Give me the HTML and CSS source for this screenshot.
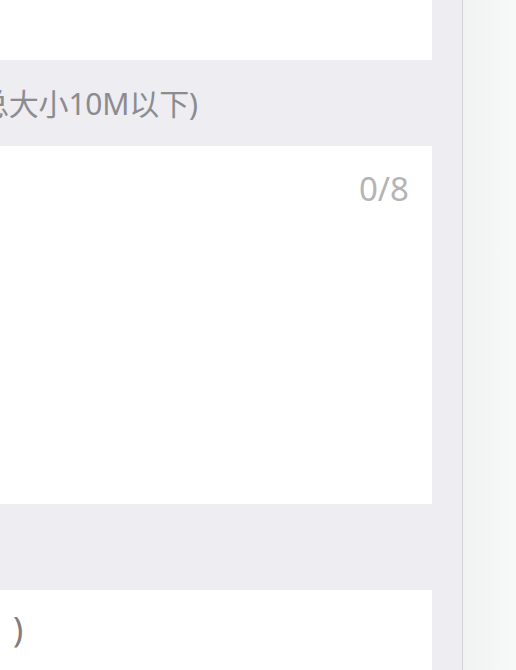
FILE: index.html
```html
<!DOCTYPE html>
<html lang="zh">
<head>
<meta charset="utf-8">
<link rel="stylesheet" href="styles.css">
</head>
<body>
<div class="page">
  <main class="main">
    <div class="card card-top"></div>
    <div class="section-title"><span class="label">总大小10M以下)</span></div>
    <div class="card card-text">
      <div class="counter">0/8</div>
    </div>
    <div class="section-gap"></div>
    <div class="card card-bottom"><span class="tail">)</span></div>
  </main>
  <div class="gutter"></div>
  <div class="divider"></div>
  <aside class="side"></aside>
</div>
</body>
</html>
```
FILE: styles.css
```css
* { box-sizing: border-box; }
html, body {
  margin: 0;
  padding: 0;
  height: 670px;
  overflow: hidden;
  font-family: "Noto Sans", "Noto Sans CJK SC", sans-serif;
}
.page {
  display: flex;
  height: 670px;
  background: #eeedf2;
}
.main {
  width: 432px;
  flex: none;
  display: flex;
  flex-direction: column;
  overflow: hidden;
}
.card { background: #ffffff; }
.card-top { height: 60px; }
.section-title {
  height: 86px;
  display: flex;
  align-items: center;
  padding-top: 2px;
}
.label {
  margin-left: -21px;
  font-size: 30px;
  line-height: 40px;
  color: #8b8b90;
  white-space: nowrap;
  letter-spacing: -0.2px;
}
.card-text {
  height: 358px;
  display: flex;
  justify-content: flex-end;
  align-items: flex-start;
  padding: 23px 23px 0 0;
}
.counter {
  font-size: 33px;
  line-height: 40px;
  color: #b4b4b4;
}
.section-gap { height: 86px; }
.card-bottom {
  flex: 1;
  padding: 14px 0 0 13px;
}
.tail {
  font-size: 34px;
  line-height: 50px;
  color: #7e7e7e;
}
.gutter {
  width: 30px;
  flex: none;
}
.divider {
  width: 1px;
  flex: none;
  background: #d3d3d5;
}
.side {
  flex: 1;
  background: linear-gradient(to right, #f1f2f2, #f7f8f8);
}
```
